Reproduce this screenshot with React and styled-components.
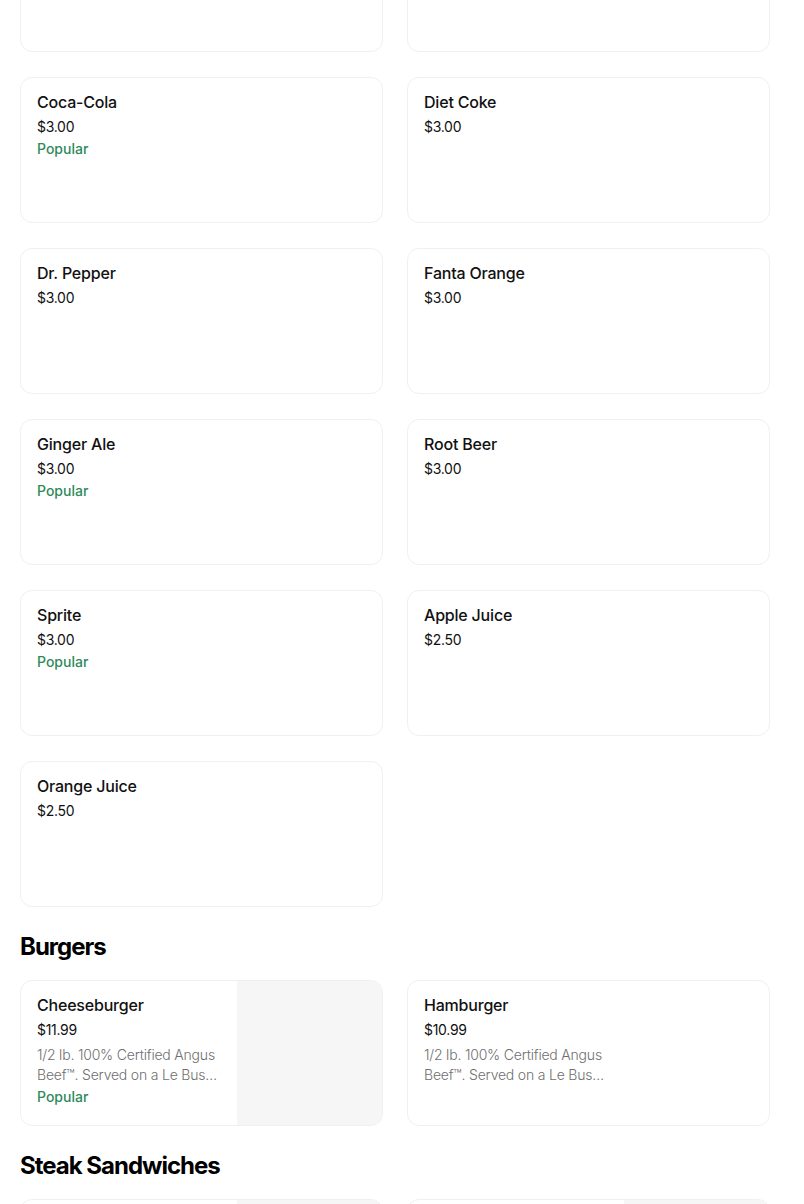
import React from "react";
import styled, { createGlobalStyle } from "styled-components";

const GlobalStyle = createGlobalStyle`
  body {
    margin: 0;
    background: #fff;
    font-family: Inter, "Noto Sans", Arial, sans-serif;
    color: #000;
  }
`;

const Page = styled.div`
  padding: 0 34px 0 20px;
  margin-top: -94px;
  display: flex;
  flex-direction: column;
`;

const Grid = styled.div`
  display: grid;
  grid-template-columns: 1fr 1fr;
  column-gap: 24px;
  row-gap: 25px;
`;

const SectionTitle = styled.h2`
  margin: 24px 0 17px;
  font-size: 24px;
  line-height: 32px;
  font-weight: 700;
  letter-spacing: -1px;
  color: #000;
`;

const Card = styled.div`
  height: 146px;
  box-sizing: border-box;
  border: 1px solid #f0f0f0;
  border-radius: 12px;
  background: #fff;
  display: flex;
  overflow: hidden;
`;

const Info = styled.div`
  flex: 1;
  padding: 13px 16px;
  display: flex;
  flex-direction: column;
`;

const Name = styled.div`
  font-size: 16px;
  line-height: 22px;
  font-weight: 500;
  letter-spacing: -0.2px;
  color: #111;
`;

const Price = styled.div`
  margin-top: 4px;
  font-size: 14px;
  line-height: 20px;
  color: #111;
  letter-spacing: -0.3px;
`;

const Desc = styled.div`
  margin-top: 5px;
  max-width: 184px;
  font-size: 14px;
  line-height: 20px;
  font-weight: 300;
  color: #6f6f6f;
  letter-spacing: -0.2px;
`;

const Popular = styled.div`
  margin-top: 2px;
  font-size: 14px;
  line-height: 20px;
  font-weight: 500;
  color: #2f8a5a;
`;

const Thumb = styled.div`
  width: 145px;
  flex-shrink: 0;
  background: #f6f6f6;
`;

const drinks = [
  { name: "", price: "" },
  { name: "", price: "" },
  { name: "Coca-Cola", price: "$3.00", popular: true },
  { name: "Diet Coke", price: "$3.00" },
  { name: "Dr. Pepper", price: "$3.00" },
  { name: "Fanta Orange", price: "$3.00" },
  { name: "Ginger Ale", price: "$3.00", popular: true },
  { name: "Root Beer", price: "$3.00" },
  { name: "Sprite", price: "$3.00", popular: true },
  { name: "Apple Juice", price: "$2.50" },
  { name: "Orange Juice", price: "$2.50" },
];

const desc = "1/2 lb. 100% Certified Angus Beef™. Served on a Le Bus…";

const burgers = [
  { name: "Cheeseburger", price: "$11.99", desc, popular: true, image: true },
  { name: "Hamburger", price: "$10.99", desc },
];

const steaks = [
  { name: "", price: "", image: true },
  { name: "", price: "", image: true },
];

function Item({ name, price, desc, popular, image }) {
  return (
    <Card>
      <Info>
        {name && <Name>{name}</Name>}
        {price && <Price>{price}</Price>}
        {desc && <Desc>{desc}</Desc>}
        {popular && <Popular>Popular</Popular>}
      </Info>
      {image && <Thumb />}
    </Card>
  );
}

export default function App() {
  return (
    <>
      <GlobalStyle />
      <Page>
        <Grid>
          {drinks.map((d, i) => (
            <Item key={i} {...d} />
          ))}
        </Grid>
        <SectionTitle>Burgers</SectionTitle>
        <Grid>
          {burgers.map((d, i) => (
            <Item key={i} {...d} />
          ))}
        </Grid>
        <SectionTitle>Steak Sandwiches</SectionTitle>
        <Grid>
          {steaks.map((d, i) => (
            <Item key={i} {...d} />
          ))}
        </Grid>
      </Page>
    </>
  );
}
